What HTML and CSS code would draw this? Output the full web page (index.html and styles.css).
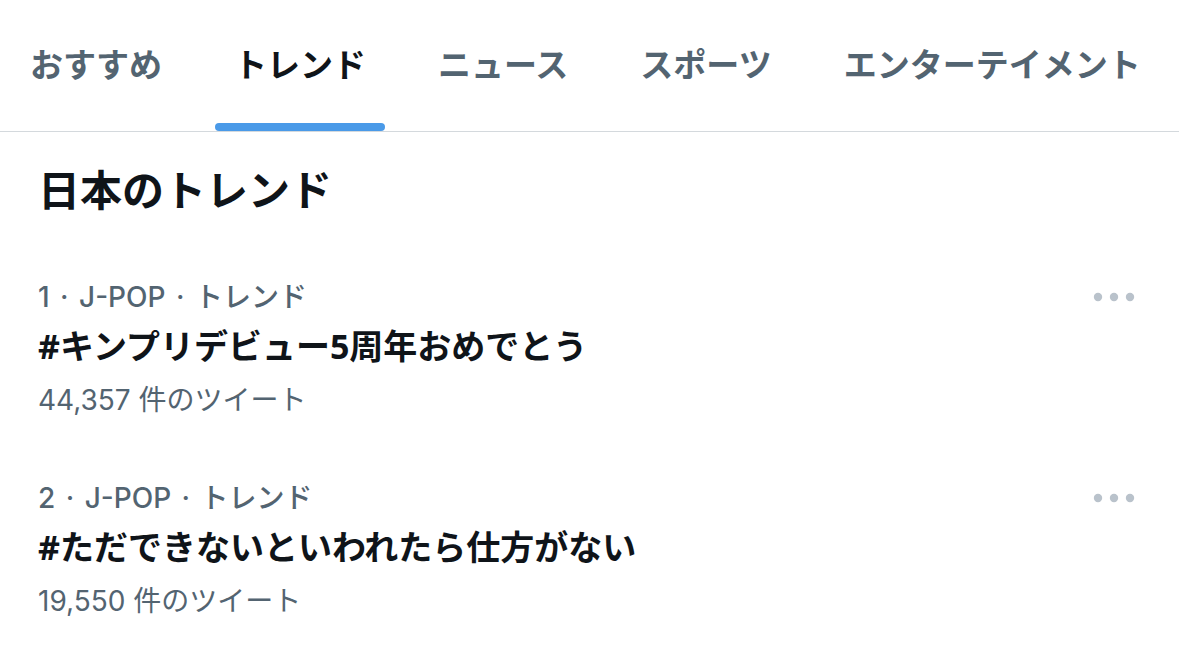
FILE: index.html
```html
<!DOCTYPE html>
<html lang="ja">
<head>
  <meta charset="UTF-8" />
  <meta name="viewport" content="width=device-width, initial-scale=1.0"/>
  <title>トレンド</title>
  <link rel="stylesheet" href="styles.css">
</head>
<body>
  <nav class="tabs">
    <div class="tab">おすすめ</div>
    <div class="tab active">トレンド</div>
    <div class="tab">ニュース</div>
    <div class="tab">スポーツ</div>
    <div class="tab">エンターテイメント</div>
  </nav>

  <h2 class="section-title">日本のトレンド</h2>

  <div class="trend-list">
    <div class="trend">
      <div class="trend-body">
        <div class="trend-meta">1 · J-POP · トレンド</div>
        <div class="trend-name">#キンプリデビュー5周年おめでとう</div>
        <div class="trend-count">44,357 件のツイート</div>
      </div>
      <svg class="more" width="44" height="10" viewBox="0 0 44 10">
        <circle cx="5" cy="5" r="4.2" />
        <circle cx="21" cy="5" r="4.2" />
        <circle cx="37" cy="5" r="4.2" />
      </svg>
    </div>

    <div class="trend">
      <div class="trend-body">
        <div class="trend-meta">2 · J-POP · トレンド</div>
        <div class="trend-name">#ただできないといわれたら仕方がない</div>
        <div class="trend-count">19,550 件のツイート</div>
      </div>
      <svg class="more" width="44" height="10" viewBox="0 0 44 10">
        <circle cx="5" cy="5" r="4.2" />
        <circle cx="21" cy="5" r="4.2" />
        <circle cx="37" cy="5" r="4.2" />
      </svg>
    </div>
  </div>
</body>
</html>
```

FILE: styles.css
```css
body {
  margin: 0;
  padding: 0;
  background: #fff;
  font-family: "Noto Sans", "Noto Sans CJK JP", sans-serif;
  color: #0f1419;
}

.tabs {
  display: flex;
  gap: 34px;
  height: 131px;
  padding-left: 11px;
  border-bottom: 1px solid #d4d9dd;
}

.tab {
  position: relative;
  padding: 45px 19px 0;
  line-height: 40px;
  font-size: 33px;
  font-weight: 700;
  color: #536471;
  white-space: nowrap;
}

.tab.active {
  color: #0f1419;
}

/* barre bleue sous l'onglet actif */
.tab.active::after {
  content: "";
  position: absolute;
  left: 0;
  right: 0;
  bottom: 0;
  height: 8px;
  border-radius: 4px;
  background: #4a9ae8;
}

.section-title {
  margin: 33px 0 0;
  padding-left: 38px;
  line-height: 50px;
  font-size: 42px;
  font-weight: 700;
}

.trend-list {
  margin-top: 33px;
}

.trend {
  display: flex;
  align-items: flex-start;
  padding: 31px 42px 31px 38px;
}

.trend-body {
  flex: 1;
}

.trend-meta {
  line-height: 36px;
  font-family: Inter, "Noto Sans CJK JP", sans-serif;
  font-size: 28px;
  font-weight: 500;
  word-spacing: 3px;
  color: #536471;
}

.trend-name {
  margin-top: 11px;
  line-height: 40px;
  font-size: 34px;
  font-weight: 700;
}

.trend-count {
  margin-top: 16px;
  line-height: 36px;
  font-family: Inter, "Noto Sans CJK JP", sans-serif;
  font-size: 28px;
  color: #536471;
}

.more {
  margin-top: 13px;
  fill: #b9c2cb;
}
```
